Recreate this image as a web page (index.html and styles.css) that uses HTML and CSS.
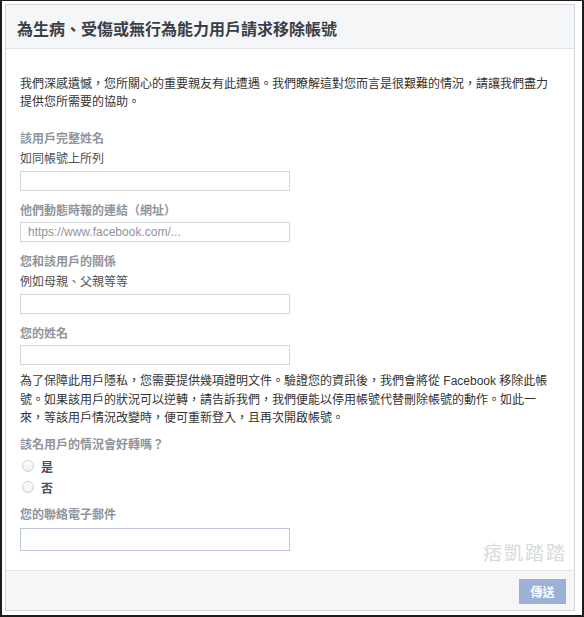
FILE: index.html
```html
<!DOCTYPE html>
<html lang="zh-Hant">
<head>
    <meta charset="UTF-8">
    <meta name="viewport" content="width=device-width, initial-scale=1.0">
    <title>為生病、受傷或無行為能力用戶請求移除帳號</title>
    <link rel="stylesheet" href="styles.css">
</head>
<body>
    <div class="frame">
        <div class="dialog">
            <div class="dialog-header">為生病、受傷或無行為能力用戶請求移除帳號</div>

            <form class="dialog-body" onsubmit="return false;">
                <p class="intro">我們深感遺憾，您所關心的重要親友有此遭遇。我們瞭解這對您而言是很艱難的情況，請讓我們盡力提供您所需要的協助。</p>

                <div class="field field-first">
                    <label class="field-label" for="full-name">該用戶完整姓名</label>
                    <div class="field-hint">如同帳號上所列</div>
                    <input class="text-input" type="text" id="full-name">
                </div>

                <div class="field">
                    <label class="field-label" for="timeline-url">他們動態時報的連結（網址）</label>
                    <input class="text-input" type="text" id="timeline-url" placeholder="https://www.facebook.com/...">
                </div>

                <div class="field">
                    <label class="field-label" for="relation">您和該用戶的關係</label>
                    <div class="field-hint">例如母親、父親等等</div>
                    <input class="text-input" type="text" id="relation">
                </div>

                <div class="field">
                    <label class="field-label" for="your-name">您的姓名</label>
                    <input class="text-input" type="text" id="your-name">
                </div>

                <p class="note">為了保障此用戶隱私，您需要提供幾項證明文件。驗證您的資訊後，我們會將從 Facebook 移除此帳號。如果該用戶的狀況可以逆轉，請告訴我們，我們便能以停用帳號代替刪除帳號的動作。如此一來，等該用戶情況改變時，便可重新登入，且再次開啟帳號。</p>

                <div class="field field-radio">
                    <div class="field-label">該名用戶的情況會好轉嗎？</div>
                    <div class="radio-list">
                        <label class="radio-row"><input type="radio" name="recover" value="yes">是</label>
                        <label class="radio-row"><input type="radio" name="recover" value="no">否</label>
                    </div>
                </div>

                <div class="field field-email">
                    <label class="field-label" for="email">您的聯絡電子郵件</label>
                    <input class="text-input text-input-email" type="email" id="email">
                </div>

                <div class="watermark">痞凱踏踏</div>
            </form>

            <div class="dialog-footer">
                <button class="btn-send" type="button" disabled>傳送</button>
            </div>
        </div>
    </div>
</body>
</html>
```

FILE: styles.css
```css
body {
    margin: 0;
    background: #fff;
    font-family: 'Liberation Sans', 'Noto Sans CJK TC', sans-serif;
    font-size: 12px;
    color: #1d2129;
}

/* dark outline round the whole capture */
.frame {
    width: 584px;
    height: 617px;
    box-sizing: border-box;
    border-style: solid;
    border-color: #1c1c1c;
    border-width: 1px 2px 2px 2px;
    padding: 3px 7px 4px 3px;
}

.dialog {
    height: 100%;
    box-sizing: border-box;
    border: 1px solid #d3d6db;
    display: flex;
    flex-direction: column;
    background: #fff;
}

.dialog-header {
    height: 44px;
    padding: 2px 11px 0;
    box-sizing: border-box;
    display: flex;
    align-items: center;
    background: #f5f6f7;
    border-bottom: 1px solid #e5e5e5;
    font-size: 16px;
    font-weight: bold;
    color: #3a3e46;
}

.dialog-body {
    position: relative;
    flex: 1;
    padding: 26px 20px 0 14px;
}

.intro,
.note {
    margin: 0;
    line-height: 18px;
    color: #333;
}

.note {
    margin-top: 7px;
    line-height: 18.5px;
}

.field {
    margin-top: 11px;
}

.field-first {
    margin-top: 19px;
}

.field-label {
    display: block;
    line-height: 18px;
    font-weight: bold;
    color: #90949c;
}

.field-hint {
    margin-top: 2px;
    line-height: 18px;
    color: #4b4f56;
}

.text-input {
    display: block;
    width: 270px;
    height: 20px;
    margin: 2px 0 0;
    padding: 0 7px;
    box-sizing: border-box;
    border: 1px solid #d6d8dc;
    border-radius: 0;
    font-family: 'Liberation Sans', sans-serif;
    font-size: 12px;
    color: #1d2129;
    outline: none;
}

.field-hint + .text-input {
    margin-top: 3px;
}

.text-input::placeholder {
    color: #90949c;
}

.text-input-email {
    height: 23px;
    margin-top: 4px;
    border-color: #bdc7d8;
}

.field-radio {
    margin-top: 8px;
}

.field-email {
    margin-top: 8px;
}

.radio-list {
    margin-top: 2px;
}

.radio-row {
    display: flex;
    align-items: center;
    height: 21px;
    font-weight: bold;
    color: #4b4f56;
}

.radio-row input[type="radio"] {
    appearance: none;
    width: 12px;
    height: 12px;
    margin: 0 7px 0 2px;
    border: 1px solid #cdd0d5;
    border-radius: 50%;
    background: linear-gradient(#ffffff, #eef0f2);
}

/* blog watermark in the corner */
.watermark {
    position: absolute;
    right: 7px;
    bottom: 5px;
    font-family: 'Noto Sans CJK TC', sans-serif;
    font-size: 19px;
    letter-spacing: 2px;
    color: #dadada;
}

.dialog-footer {
    height: 40px;
    padding: 8px 8px 0;
    box-sizing: border-box;
    display: flex;
    justify-content: flex-end;
    align-items: flex-start;
    background: #f5f6f7;
    border-top: 1px solid #e5e5e5;
}

.btn-send {
    width: 47px;
    height: 25px;
    padding: 0;
    border: 1px solid #9cb0d5;
    background: #9db0d6;
    color: #fff;
    font-family: 'Liberation Sans', 'Noto Sans CJK TC', sans-serif;
    font-size: 12px;
    font-weight: bold;
}
```
